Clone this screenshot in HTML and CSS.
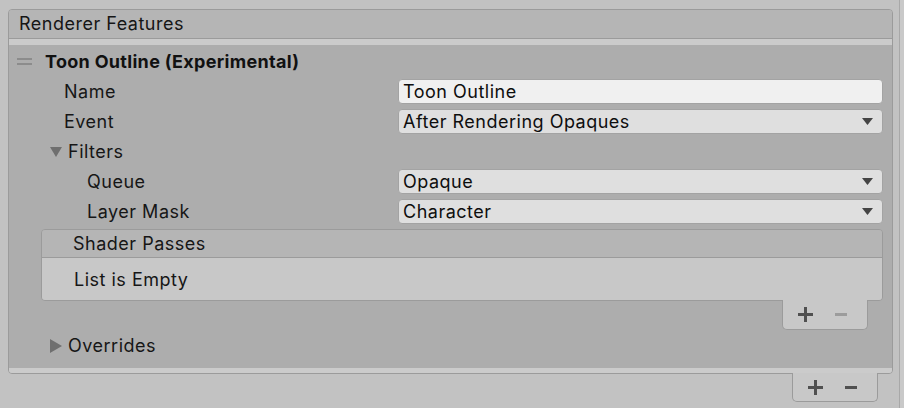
FILE: index.html
```html
<!DOCTYPE html>
<html lang="en">
<head>
<meta charset="utf-8">
<title>Renderer Features</title>
<link rel="stylesheet" href="styles.css">
</head>
<body>
<div class="window">
  <div class="inspector">
    <section class="panel">
      <header class="panel-header">Renderer Features</header>
      <div class="panel-strip"></div>
      <div class="panel-body">
        <div class="feature-title">
          <span class="handle"></span>
          <span>Toon Outline (Experimental)</span>
        </div>
        <div class="prop">
          <span class="label indent1">Name</span>
          <div class="field text-field">Toon Outline</div>
        </div>
        <div class="prop">
          <span class="label indent1">Event</span>
          <div class="field dropdown"><span>After Rendering Opaques</span><svg class="caret" width="11" height="7" viewBox="0 0 11 7"><path d="M0 0H11L5.5 7Z"/></svg></div>
        </div>
        <div class="prop">
          <span class="label foldout"><svg class="tri" width="12" height="10" viewBox="0 0 12 10"><path d="M0 0H12L6 10Z"/></svg>Filters</span>
        </div>
        <div class="prop">
          <span class="label indent2">Queue</span>
          <div class="field dropdown"><span>Opaque</span><svg class="caret" width="11" height="7" viewBox="0 0 11 7"><path d="M0 0H11L5.5 7Z"/></svg></div>
        </div>
        <div class="prop">
          <span class="label indent2">Layer Mask</span>
          <div class="field dropdown"><span>Character</span><svg class="caret" width="11" height="7" viewBox="0 0 11 7"><path d="M0 0H11L5.5 7Z"/></svg></div>
        </div>
        <div class="list">
          <div class="list-header">Shader Passes</div>
          <div class="list-body">List is Empty</div>
        </div>
        <div class="list-actions">
          <div class="tab">
            <span class="plus"></span>
            <span class="minus disabled"></span>
          </div>
        </div>
        <div class="prop after-list">
          <span class="label foldout"><svg class="tri" width="12" height="14" viewBox="0 0 12 14"><path d="M0 0L12 7L0 14Z"/></svg>Overrides</span>
        </div>
      </div>
      <div class="panel-footer"></div>
    </section>
    <div class="panel-actions">
      <div class="tab">
        <span class="plus"></span>
        <span class="minus"></span>
      </div>
    </div>
  </div>
</div>
</body>
</html>
```
FILE: styles.css
```css
* { box-sizing: border-box; }

html, body {
  margin: 0;
  padding: 0;
}

body {
  width: 904px;
  height: 408px;
  overflow: hidden;
  background: #c9c9c9;
  font-family: Inter, "Noto Sans", "DejaVu Sans", sans-serif;
  font-size: 18px;
  letter-spacing: 0.5px;
  color: #161616;
}

.window {
  display: flex;
  height: 408px;
}

.inspector {
  width: 900px;
  height: 408px;
  background: #c2c2c2;
  border-right: 1px solid #a8a8a8;
}

.panel {
  margin: 9px 0 0 8px;
  width: 885px;
  border: 1px solid #9b9b9b;
  border-radius: 4px;
  overflow: hidden;
}

.panel-header {
  height: 29px;
  line-height: 28px;
  padding-left: 10px;
  background: #b5b5b5;
  border-bottom: 1px solid #9b9b9b;
}

.panel-strip {
  height: 6px;
  background: #cbcbcb;
}

.panel-body {
  background: #adadad;
  padding: 2px 0 10px 0;
}

.feature-title {
  display: flex;
  align-items: center;
  height: 28px;
  padding-left: 8px;
  font-weight: 700;
  letter-spacing: 0.3px;
  color: #111;
}

.handle {
  width: 15px;
  height: 7px;
  margin-right: 13px;
  border-top: 2px solid #8c8c8c;
  border-bottom: 2px solid #8c8c8c;
}

.prop {
  display: grid;
  grid-template-columns: 389px 1fr;
  align-items: center;
  height: 25px;
  margin-top: 5px;
  padding-right: 9px;
}

.feature-title + .prop { margin-top: 4px; }

.prop.after-list { margin-top: 3px; }

.label {
  display: flex;
  align-items: center;
  line-height: 25px;
  white-space: nowrap;
}

.indent1 { padding-left: 55px; }
.indent2 { padding-left: 78px; }

.foldout { padding-left: 41px; }

.tri {
  fill: #6f6f6f;
  margin-right: 6px;
}

.field {
  height: 25px;
  line-height: 23px;
  border: 1px solid #a3a3a3;
  border-radius: 4px;
  padding-left: 4px;
  color: #0e0e0e;
  white-space: nowrap;
}

.text-field {
  background: #f0f0f0;
}

.dropdown {
  display: flex;
  align-items: center;
  justify-content: space-between;
  background: #dfdfdf;
  padding-right: 9px;
}

.caret { fill: #444; }

.list {
  margin: 5px 9px 0 32px;
  border: 1px solid #9b9b9b;
  border-radius: 4px;
  overflow: hidden;
}

.list-header {
  height: 28px;
  line-height: 27px;
  padding-left: 31px;
  background: #b5b5b5;
  border-bottom: 1px solid #9b9b9b;
}

.list-body {
  height: 42px;
  line-height: 36px;
  padding: 4px 0 0 32px;
  background: #c8c8c8;
}

.list-actions {
  display: flex;
  justify-content: flex-end;
  padding-right: 24px;
}

.list-actions .tab {
  margin-top: -1px;
  height: 30px;
}

.tab {
  display: flex;
  align-items: center;
  width: 86px;
  background: #c8c8c8;
  border: 1px solid #9b9b9b;
  border-top: none;
  border-radius: 0 0 5px 5px;
  position: relative;
}

.plus {
  position: relative;
  width: 15px;
  height: 15px;
  margin-left: 15px;
}

.plus::before,
.plus::after {
  content: "";
  position: absolute;
  background: #505050;
}

.plus::before { left: 0; right: 0; top: 6px; height: 3px; }
.plus::after { top: 0; bottom: 0; left: 6px; width: 3px; }

.minus {
  width: 12px;
  height: 3px;
  margin-left: 22px;
  background: #505050;
}

.minus.disabled { background: #9c9c9c; }

.panel-footer {
  height: 5px;
  background: #cbcbcb;
}

.panel-actions {
  display: flex;
  justify-content: flex-end;
  padding-right: 21px;
}

.panel-actions .tab {
  margin-top: -1px;
  height: 29px;
}
```
